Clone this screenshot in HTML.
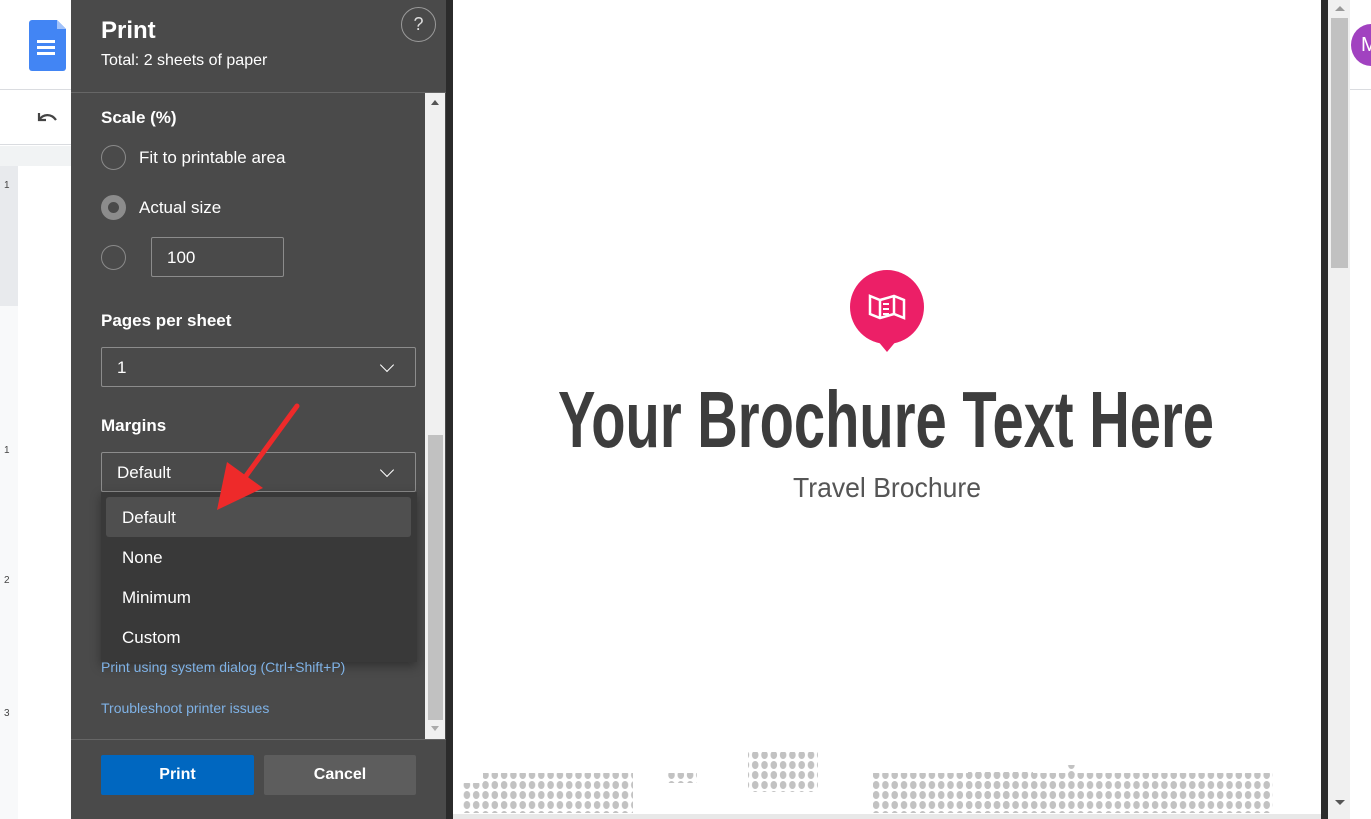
<!DOCTYPE html>
<html><head><meta charset="utf-8"><style>
*{margin:0;padding:0;box-sizing:border-box}
body{width:1371px;height:819px;overflow:hidden;position:relative;background:#fff;font-family:"Liberation Sans",sans-serif}
.abs{position:absolute}
.panel{left:71px;top:0;width:375px;height:819px;background:#4a4a4a;color:#fff}
.t{position:absolute;color:#fff;font-size:17px}
.b{font-weight:bold}
.radio{position:absolute;width:25px;height:25px;border:1px solid #8a8a8a;border-radius:50%}
.sel{position:absolute;border:1px solid #8c8c8c;border-radius:2px}
.chev{position:absolute;width:10px;height:10px;border-right:1.5px solid #fff;border-bottom:1.5px solid #fff;transform:rotate(45deg)}
.link{position:absolute;color:#7fb2e6;font-size:14px}
</style></head><body>
<div class="abs" style="left:0;top:0;width:71px;height:90px;background:#fff;border-bottom:1px solid #dadce0"></div>
<svg class="abs" style="left:29px;top:20px" width="37" height="51"><path d="M3 0h25l9 9v39a3 3 0 0 1-3 3H3a3 3 0 0 1-3-3V3a3 3 0 0 1 3-3z" fill="#4285f4"/><path d="M28 0v9h9z" fill="#a1c2fa"/><rect x="8" y="20" width="18" height="3" fill="#fff"/><rect x="8" y="26" width="18" height="3" fill="#fff"/><rect x="8" y="32" width="18" height="3" fill="#fff"/></svg>
<div class="abs" style="left:0;top:91px;width:71px;height:54px;background:#fff;border-bottom:1px solid #dadce0"></div>
<svg class="abs" style="left:36px;top:110px" width="24" height="16"><path d="M3 3v7h7" fill="none" stroke="#444" stroke-width="2.2"/><path d="M3 10c4-6 12-7 17 0" fill="none" stroke="#444" stroke-width="2.2"/></svg>
<div class="abs" style="left:0;top:146px;width:71px;height:20px;background:#f1f3f4"></div>
<div class="abs" style="left:0;top:166px;width:18px;height:653px;background:#f8f9fa"></div>
<div class="abs" style="left:0;top:166px;width:18px;height:140px;background:#e8eaed"></div>
<div class="abs" style="left:18px;top:166px;width:53px;height:653px;background:#fff"></div>
<div class="abs" style="left:4px;top:180px;font-size:10px;color:#444">1</div>
<div class="abs" style="left:4px;top:445px;font-size:10px;color:#444">1</div>
<div class="abs" style="left:4px;top:575px;font-size:10px;color:#444">2</div>
<div class="abs" style="left:4px;top:708px;font-size:10px;color:#444">3</div>

<div class="abs panel">
  <div class="t b" style="left:30px;top:17px;font-size:24px">Print</div>
  <div class="t" style="left:30px;top:52px;font-size:16px">Total: 2 sheets of paper</div>
  <div class="abs" style="left:330px;top:7px;width:35px;height:35px;border:1px solid #9a9a9a;border-radius:50%;color:#ddd;text-align:center;line-height:33px;font-size:18px">?</div>
  <div class="abs" style="left:0;top:92px;width:375px;height:1px;background:#666"></div>
  <div class="t b" style="left:30px;top:108px">Scale (%)</div>
  <div class="radio" style="left:30px;top:145px"></div>
  <div class="t" style="left:68px;top:148px">Fit to printable area</div>
  <div class="radio" style="left:30px;top:195px;border:7px solid #8c8c8c"></div>
  <div class="t" style="left:68px;top:198px">Actual size</div>
  <div class="radio" style="left:30px;top:245px"></div>
  <div class="sel" style="left:80px;top:237px;width:133px;height:40px"></div>
  <div class="t" style="left:96px;top:248px">100</div>
  <div class="t b" style="left:30px;top:311px">Pages per sheet</div>
  <div class="sel" style="left:30px;top:347px;width:315px;height:40px"></div>
  <div class="t" style="left:46px;top:358px">1</div>
  <div class="chev" style="left:311px;top:360px"></div>
  <div class="t b" style="left:30px;top:416px">Margins</div>
  <div class="sel" style="left:30px;top:452px;width:315px;height:40px"></div>
  <div class="t" style="left:46px;top:463px">Default</div>
  <div class="chev" style="left:311px;top:465px"></div>
  <div class="abs" style="left:30px;top:492px;width:316px;height:170px;background:#393939;box-shadow:0 4px 10px rgba(0,0,0,.35)"></div>
  <div class="abs" style="left:35px;top:497px;width:305px;height:40px;background:#4f4f4f;border-radius:3px"></div>
  <div class="t" style="left:51px;top:508px">Default</div>
  <div class="t" style="left:51px;top:548px">None</div>
  <div class="t" style="left:51px;top:588px">Minimum</div>
  <div class="t" style="left:51px;top:628px">Custom</div>
  <div class="link" style="left:30px;top:659px">Print using system dialog (Ctrl+Shift+P)</div>
  <div class="link" style="left:30px;top:700px">Troubleshoot printer issues</div>
  <div class="abs" style="left:354px;top:93px;width:20px;height:646px;background:#f0f0f0"></div>
  <div class="abs" style="left:357px;top:435px;width:15px;height:285px;background:#c1c1c1"></div>
  <div class="abs" style="left:360px;top:100px;border:4px solid transparent;border-bottom:5px solid #555;border-top:0"></div>
  <div class="abs" style="left:360px;top:726px;border:4px solid transparent;border-top:5px solid #aaa;border-bottom:0"></div>
  <div class="abs" style="left:0;top:739px;width:375px;height:1px;background:#666"></div>
  <div class="abs" style="left:30px;top:755px;width:153px;height:40px;background:#0067c0;border-radius:2px;text-align:center;line-height:40px;font-weight:bold;font-size:16px">Print</div>
  <div class="abs" style="left:193px;top:755px;width:152px;height:40px;background:#5d5d5d;border-radius:2px;text-align:center;line-height:40px;font-weight:bold;font-size:16px">Cancel</div>
</div>
<svg class="abs" style="left:205px;top:400px" width="100" height="120"><path d="M92 6 L38 80" stroke="#ee2a2a" stroke-width="5" stroke-linecap="round"/><path d="M12 110 L22 62 L58 88 Z" fill="#ee2a2a"/></svg>

<div class="abs" style="left:446px;top:0;width:7px;height:819px;background:#2b2b2b"></div>
<div class="abs" style="left:1321px;top:0;width:7px;height:819px;background:#2b2b2b"></div>
<div class="abs" style="left:453px;top:814px;width:868px;height:5px;background:#e8e8e8"></div>
<svg class="abs" style="left:453px;top:0" width="868" height="814">
  <defs><pattern id="d" width="9.3" height="10" patternUnits="userSpaceOnUse"><ellipse cx="4.6" cy="5" rx="3.3" ry="4" fill="#c2c2c2"/></pattern></defs>
  <circle cx="434" cy="307" r="37" fill="#ec1f67"/>
  <path d="M424 340 L434 352 L444 340 Z" fill="#ec1f67"/>
  <path d="M417 296 l10 4 l14 -4 l10 4 v18 l-10 -4 l-14 4 l-10 -4 z M427 300 v18 M441 296 v18" fill="none" stroke="#fff" stroke-width="2.5"/>
  <path d="M430 304h6 M430 309h6 M430 314h6" stroke="#fff" stroke-width="2"/>
  <text x="105" y="447" textLength="656" lengthAdjust="spacingAndGlyphs" font-family="Liberation Sans Narrow, Liberation Sans, sans-serif" font-weight="bold" font-size="80" fill="#3d3d3d">Your Brochure Text Here</text>
  <text x="340" y="497" textLength="188" lengthAdjust="spacingAndGlyphs" font-family="Liberation Sans Narrow, Liberation Sans, sans-serif" font-size="28" fill="#555">Travel Brochure</text>
  <rect x="10" y="783" width="170" height="30" fill="url(#d)"/>
  <rect x="30" y="773" width="150" height="10" fill="url(#d)"/>
  <rect x="295" y="752" width="70" height="40" fill="url(#d)"/>
  <rect x="214" y="773" width="30" height="10" fill="url(#d)"/>
  <rect x="420" y="773" width="140" height="40" fill="url(#d)"/>
  <rect x="580" y="773" width="240" height="40" fill="url(#d)"/>
  <rect x="515" y="772" width="65" height="41" fill="url(#d)"/>
  <rect x="614" y="765" width="10" height="10" fill="url(#d)"/>
</svg>
<div class="abs" style="left:1328px;top:0;width:22px;height:819px;background:#f0f0f0"></div>
<div class="abs" style="left:1331px;top:18px;width:17px;height:250px;background:#c1c1c1"></div>
<div class="abs" style="left:1335px;top:6px;border:5px solid transparent;border-bottom:5px solid #999;border-top:0"></div>
<div class="abs" style="left:1335px;top:800px;border:5px solid transparent;border-top:5px solid #555;border-bottom:0"></div>
<div class="abs" style="left:1350px;top:0;width:21px;height:90px;background:#fff;border-bottom:1px solid #dadce0"></div>
<div class="abs" style="left:1351px;top:24px;width:40px;height:42px;border-radius:50%;background:#a142c0;color:#fff;font-size:20px;line-height:42px;padding-left:10px">M</div>
</body></html>
